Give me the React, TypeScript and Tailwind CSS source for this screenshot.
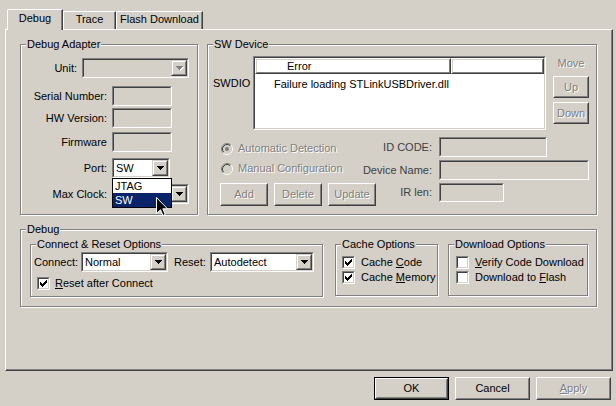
import React from "react";

type P = { className?: string; inner?: string; children?: React.ReactNode };

const dis = "text-[#808080] [text-shadow:1px_1px_0_#fff]";

function Sunken({ className = "", inner = "", children }: P) {
  return (
    <div className={"flex border border-t-[#808080] border-l-[#808080] border-b-white border-r-white " + className}>
      <div className={"flex-1 flex min-w-0 border border-t-[#404040] border-l-[#404040] border-b-[#D4D0C8] border-r-[#D4D0C8] " + inner}>
        {children}
      </div>
    </div>
  );
}

function Raised({ className = "", inner = "", children }: P) {
  return (
    <div className={"flex border border-t-white border-l-white border-b-[#404040] border-r-[#404040] " + className}>
      <div className={"flex-1 flex items-center justify-center border border-t-[#D4D0C8] border-l-[#D4D0C8] border-b-[#808080] border-r-[#808080] " + inner}>
        {children}
      </div>
    </div>
  );
}

function Btn({ className = "", disabled, children }: P & { disabled?: boolean }) {
  return (
    <Raised className={"shrink-0 " + className} inner={disabled ? dis : ""}>
      {children}
    </Raised>
  );
}

function Arrow({ disabled }: { disabled?: boolean }) {
  const d = "M0 0h7v1H0z M1 1h5v1H1z M2 2h3v1H2z M3 3h1v1H3z";
  return (
    <svg width="8" height="5" viewBox="0 0 8 5" shapeRendering="crispEdges">
      {disabled && <path d={d} transform="translate(1 1)" fill="#fff" />}
      <path d={d} fill={disabled ? "#808080" : "#000"} />
    </svg>
  );
}

function ArrowBtn({ disabled }: { disabled?: boolean }) {
  return (
    <div className="flex w-[16px] shrink-0 border border-t-[#D4D0C8] border-l-[#D4D0C8] border-b-[#404040] border-r-[#404040]">
      <div className="flex-1 flex items-center justify-center pl-[1px] bg-[#D4D0C8] border border-t-white border-l-white border-b-[#808080] border-r-[#808080]">
        <Arrow disabled={disabled} />
      </div>
    </div>
  );
}

function Combo({ className = "", value, disabled }: { className?: string; value?: string; disabled?: boolean }) {
  return (
    <Sunken className={"shrink-0 " + className} inner={disabled ? "bg-[#D4D0C8]" : "bg-white"}>
      <div className="flex-1 min-w-0 flex items-center pl-[2px] whitespace-nowrap overflow-hidden">{value}</div>
      <ArrowBtn disabled={disabled} />
    </Sunken>
  );
}

function Edit({ className = "" }: { className?: string }) {
  return <Sunken className={"shrink-0 " + className} inner="bg-[#D4D0C8]" />;
}

function Check({ checked }: { checked?: boolean }) {
  return (
    <Sunken className="w-[13px] h-[13px] shrink-0" inner="bg-white items-center justify-center">
      {checked && (
        <svg width="7" height="7" viewBox="0 0 7 7" shapeRendering="crispEdges">
          <path
            d="M6 0h1v1h-1z M5 1h2v1h-2z M0 2h1v1h-1z M4 2h3v1h-3z M0 3h2v1h-2z M3 3h3v1h-3z M0 4h5v1h-5z M1 5h3v1h-3z M2 6h1v1h-1z"
            fill="#000"
          />
        </svg>
      )}
    </Sunken>
  );
}

function Radio({ checked }: { checked?: boolean }) {
  return (
    <svg width="12" height="12" viewBox="0 0 12 12" className="shrink-0">
      <circle cx="6" cy="6" r="5" fill="#D4D0C8" />
      <path d="M2.11 9.89A5.5 5.5 0 0 1 9.89 2.11" stroke="#808080" fill="none" />
      <path d="M9.89 2.11A5.5 5.5 0 0 1 2.11 9.89" stroke="#fff" fill="none" />
      <path d="M2.82 9.18A4.5 4.5 0 0 1 9.18 2.82" stroke="#404040" fill="none" />
      <path d="M9.18 2.82A4.5 4.5 0 0 1 2.82 9.18" stroke="#D4D0C8" fill="none" />
      {checked && <circle cx="6" cy="6" r="2" fill="#808080" />}
    </svg>
  );
}

function Group({ title, className = "", children }: { title: string; className?: string; children?: React.ReactNode }) {
  return (
    <div className={"relative shrink-0 border border-[#808080] shadow-[inset_1px_1px_0_#fff,1px_1px_0_#fff] " + className}>
      <span className="absolute -top-[7px] left-[5px] px-[1px] bg-[#D4D0C8] leading-[13px] whitespace-nowrap">{title}</span>
      {children}
    </div>
  );
}

function Tab({ label, selected, className = "" }: { label: string; selected?: boolean; className?: string }) {
  return (
    <div
      className={
        "flex justify-center bg-[#D4D0C8] border-t border-l border-r border-t-white border-l-white border-r-[#404040] shadow-[inset_-1px_0_0_#808080] rounded-tl-[2px] " +
        (selected ? "relative z-10 h-[21px] -mb-[1px] pt-[2px] " : "h-[18px] pt-[1px] ") +
        className
      }
    >
      {label}
    </div>
  );
}

export default function App() {
  return (
    <div className="w-[616px] h-[406px] overflow-hidden bg-[#D4D0C8] text-black text-[11px] leading-[13px] font-['Liberation_Sans',Arial,sans-serif]">
      <div className="h-[9px]" />
      {/* Tabs */}
      <div className="flex items-end pl-[7px] h-[20px]">
        <Tab label="Debug" selected className="w-[56px]" />
        <Tab label="Trace" className="w-[53px]" />
        <Tab label="Flash Download" className="w-[87px]" />
      </div>
      {/* Panel */}
      <div className="ml-[5px] w-[608px] h-[342px] border border-t-white border-l-white border-b-[#404040] border-r-[#404040] shadow-[inset_-1px_-1px_0_#808080] pl-[14px] pt-[14px]">
        <div className="flex gap-[9px]">
          {/* Debug Adapter */}
          <Group title="Debug Adapter" className="w-[178px] h-[171px]">
            <div className="flex flex-col">
              <div className="flex items-center mt-[13px] h-[20px]">
                <div className="w-[56px] text-right">Unit:</div>
                <Combo className="ml-[5px] w-[107px] h-[20px]" disabled />
              </div>
              <div className="flex items-center mt-[8px] h-[20px]">
                <div className="w-[86px] text-right whitespace-nowrap">Serial Number:</div>
                <Edit className="ml-[5px] w-[60px] h-[20px]" />
              </div>
              <div className="flex items-center mt-[2px] h-[20px]">
                <div className="w-[86px] text-right whitespace-nowrap">HW Version:</div>
                <Edit className="ml-[5px] w-[60px] h-[20px]" />
              </div>
              <div className="flex items-center mt-[4px] h-[20px]">
                <div className="w-[86px] text-right whitespace-nowrap">Firmware</div>
                <Edit className="ml-[5px] w-[60px] h-[20px]" />
              </div>
              <div className="flex items-center mt-[6px] h-[20px]">
                <div className="w-[86px] text-right whitespace-nowrap">Port:</div>
                <Combo className="ml-[5px] w-[58px] h-[20px]" value="SW" />
              </div>
              <div className="flex items-center mt-[6px] h-[20px]">
                <div className="w-[86px] text-right whitespace-nowrap">Max Clock:</div>
                <Combo className="ml-[5px] w-[77px] h-[20px]" value="" />
              </div>
            </div>
            {/* open dropdown list */}
            <div className="absolute z-20 left-[91px] top-[133px] w-[60px] h-[30px] border border-black bg-white flex flex-col">
              <div className="h-[14px] pl-[2px] leading-[14px]">JTAG</div>
              <div className="h-[14px] pl-[2px] leading-[14px] bg-[#0A246A] text-white">SW</div>
            </div>
            <svg className="absolute z-30 left-[135px] top-[152px]" width="13" height="20" viewBox="0 0 13 20">
              <path d="M0.5 0.5V16.5L4.5 12.8L7 18.5L9.3 17.5L6.8 11.8H11.5Z" fill="#000" stroke="#fff" strokeWidth="1" />
            </svg>
          </Group>

          {/* SW Device */}
          <Group title="SW Device" className="w-[390px] h-[171px]">
            <div className="flex mt-[11px]">
              <div className="w-[45px] pl-[5px] pt-[21px]">SWDIO</div>
              <Sunken className="w-[293px] h-[74px] shrink-0" inner="bg-white flex-col">
                <div className="flex h-[16px] shrink-0">
                  <Raised className="w-[196px]" inner="justify-start pl-[30px]">Error</Raised>
                  <Raised className="flex-1" />
                </div>
                <div className="pl-[19px] pt-[4px] whitespace-nowrap">Failure loading STLinkUSBDriver.dll</div>
              </Sunken>
              <div className="ml-[7px] w-[36px] flex flex-col">
                <div className={"mt-[1px] h-[13px] text-center " + dis}>Move</div>
                <Btn className="mt-[6px] h-[22px]" disabled>Up</Btn>
                <Btn className="mt-[4px] h-[22px]" disabled>Down</Btn>
              </div>
            </div>
            <div className="flex mt-[7px]">
              <div className="w-[152px] shrink-0 pl-[13px] flex flex-col">
                <div className="flex items-center mt-[5px] h-[13px]">
                  <Radio checked />
                  <span className={"ml-[5px] whitespace-nowrap " + dis}>Automatic Detection</span>
                </div>
                <div className="flex items-center mt-[7px] h-[13px]">
                  <Radio />
                  <span className={"ml-[5px] whitespace-nowrap " + dis}>Manual Configuration</span>
                </div>
                <div className="flex gap-[6px] mt-[8px] -ml-[1px] w-[156px]">
                  <Btn className="w-[48px] h-[23px]" disabled>Add</Btn>
                  <Btn className="w-[48px] h-[23px]" disabled>Delete</Btn>
                  <Btn className="w-[48px] h-[23px]" disabled>Update</Btn>
                </div>
              </div>
              <div className="flex flex-col">
                <div className="flex items-center h-[20px]">
                  <div className="w-[72px] text-right whitespace-nowrap text-[#404040]">ID CODE:</div>
                  <Edit className="ml-[7px] w-[108px] h-[20px]" />
                </div>
                <div className="flex items-center h-[20px] mt-[3px]">
                  <div className="w-[72px] text-right whitespace-nowrap text-[#404040]">Device Name:</div>
                  <Edit className="ml-[7px] w-[150px] h-[20px]" />
                </div>
                <div className="flex items-center h-[19px] mt-[3px]">
                  <div className="w-[72px] text-right whitespace-nowrap text-[#404040]">IR len:</div>
                  <Edit className="ml-[7px] w-[65px] h-[19px]" />
                </div>
              </div>
            </div>
          </Group>
        </div>

        {/* Debug */}
        <Group title="Debug" className="mt-[14px] w-[577px] h-[78px]">
          <div className="flex mt-[14px] pl-[9px]">
            <Group title="Connect & Reset Options" className="w-[293px] h-[53px]">
              <div className="flex items-center mt-[7px] h-[20px] pl-[3px]">
                <div className="w-[47px] whitespace-nowrap">Connect:</div>
                <Combo className="w-[87px] h-[20px]" value="Normal" />
                <div className="ml-[6px] w-[36px] whitespace-nowrap">Reset:</div>
                <Combo className="w-[104px] h-[20px]" value="Autodetect" />
              </div>
              <div className="flex items-center mt-[5px] pl-[6px] h-[13px]">
                <Check checked />
                <span className="ml-[5px] whitespace-nowrap">
                  <u>R</u>eset after Connect
                </span>
              </div>
            </Group>
            <Group title="Cache Options" className="ml-[12px] w-[103px] h-[52px]">
              <div className="flex flex-col pl-[6px] mt-[11px]">
                <div className="flex items-center h-[13px]">
                  <Check checked />
                  <span className="ml-[6px] whitespace-nowrap">
                    Cache <u>C</u>ode
                  </span>
                </div>
                <div className="flex items-center h-[13px] mt-[2px]">
                  <Check checked />
                  <span className="ml-[6px] whitespace-nowrap">
                    Cache <u>M</u>emory
                  </span>
                </div>
              </div>
            </Group>
            <Group title="Download Options" className="ml-[10px] w-[140px] h-[52px]">
              <div className="flex flex-col pl-[7px] mt-[11px]">
                <div className="flex items-center h-[13px]">
                  <Check />
                  <span className="ml-[6px] whitespace-nowrap">
                    <u>V</u>erify Code Download
                  </span>
                </div>
                <div className="flex items-center h-[13px] mt-[2px]">
                  <Check />
                  <span className="ml-[6px] whitespace-nowrap">
                    Download to <u>F</u>lash
                  </span>
                </div>
              </div>
            </Group>
          </div>
        </Group>
      </div>

      {/* Bottom buttons */}
      <div className="flex justify-end gap-[6px] pr-[5px] mt-[6px]">
        <div className="flex border border-black w-[75px] h-[23px]">
          <Raised className="flex-1">OK</Raised>
        </div>
        <Btn className="w-[75px] h-[23px]">Cancel</Btn>
        <Btn className="w-[75px] h-[23px]" disabled>
          <u>A</u>pply
        </Btn>
      </div>
    </div>
  );
}
